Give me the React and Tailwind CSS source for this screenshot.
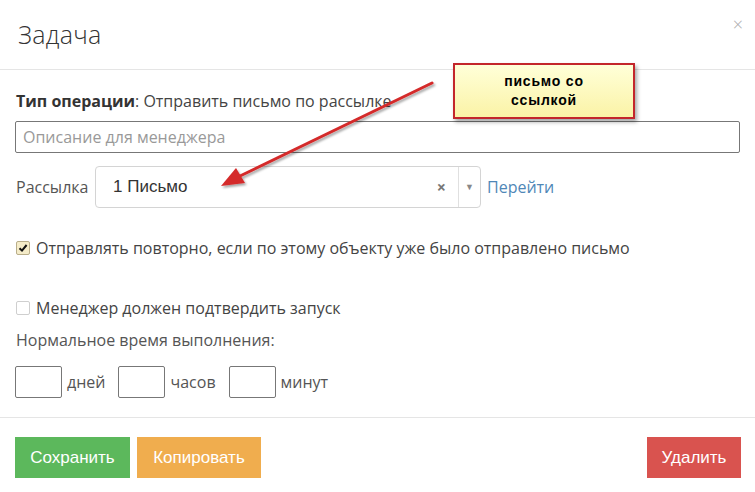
import React from "react";

const Checkbox = ({ checked }) => (
  <span
    className={`flex h-[14px] w-[14px] shrink-0 items-center justify-center rounded-[2px] border ${
      checked ? "border-[#b9ae8a] bg-[#f5ecc9]" : "border-[#cfcfcf] bg-white"
    }`}
  >
    {checked && (
      <svg width="10" height="10" viewBox="0 0 10 10">
        <path d="M1.5 5.2 L4 7.6 L8.6 2" fill="none" stroke="#111" strokeWidth="2" />
      </svg>
    )}
  </span>
);

const SmallInput = ({ label }) => (
  <div className="flex items-center gap-[5px]">
    <div className="h-[32px] w-[47px] rounded-[2px] border border-[#777]" />
    <span className="text-[16px] text-[#555]">{label}</span>
  </div>
);

export default function App() {
  return (
    <div
      className="relative h-[492px] w-[755px] overflow-hidden bg-white text-[#333]"
      style={{ fontFamily: "'Open Sans', 'Liberation Sans', sans-serif" }}
    >
      {/* header */}
      <div className="flex h-[70px] items-center justify-between border-b border-[#e5e5e5] pl-[18px] pr-[12px]">
        <h2 className="text-[25px] font-light tracking-[0.3px] text-[#333]">Задача</h2>
        <span className="-mt-[20px] text-[18px] font-light text-[#aaa]">×</span>
      </div>

      {/* body */}
      <div className="flex flex-col px-[15px] pt-[20px] text-[16px] leading-[22px]">
        <div className="pl-[1px] text-[#444]">
          <span className="font-bold text-[#333]">Тип операции</span>: Отправить письмо по рассылке
        </div>
        <div className="mt-[9px] flex h-[32px] items-center rounded-[2px] border border-[#777] px-[7px] text-[#999]">
          Описание для менеджера
        </div>

        <div className="mt-[13px] flex items-center">
          <span className="w-[80px] pl-[1px] text-[#555]">Рассылка</span>
          <div className="flex h-[42px] w-[386px] items-center rounded-[4px] border border-[#d4d4d4]">
            <span
              className="flex-1 pl-[17px] text-[17px] text-[#333]"
              style={{ fontFamily: "'Liberation Sans', Arial, sans-serif" }}
            >
              1 Письмо
            </span>
            <span className="pr-[12px] text-[16px] font-bold text-[#777]">×</span>
            <div className="flex h-full w-[22px] items-center justify-center border-l border-[#e0e0e0] text-[9px] text-[#888]">
              ▼
            </div>
          </div>
          <span className="ml-[6px] text-[#4f87b7]">Перейти</span>
        </div>

        <label className="mt-[29px] flex items-center gap-[6px] pl-[1px] text-[#444]">
          <Checkbox checked />
          Отправлять повторно, если по этому объекту уже было отправлено письмо
        </label>

        <label className="mt-[38px] flex items-center gap-[6px] pl-[1px] text-[#444]">
          <Checkbox />
          Менеджер должен подтвердить запуск
        </label>

        <div className="mt-[10px] pl-[1px] text-[#555]">Нормальное время выполнения:</div>

        <div className="mt-[15px] flex items-center gap-[13px]">
          <SmallInput label="дней" />
          <SmallInput label="часов" />
          <SmallInput label="минут" />
        </div>
      </div>

      {/* footer */}
      <div
        className="mt-[19px] flex items-center justify-between border-t border-[#e5e5e5] px-[15px] pt-[19px] text-[17px] text-white"
        style={{ fontFamily: "'Liberation Sans Narrow', 'Liberation Sans', sans-serif" }}
      >
        <div className="flex gap-[7px]">
          <button className="h-[41px] w-[115px] bg-[#5cb85c]">Сохранить</button>
          <button className="h-[41px] w-[124px] bg-[#f0ad4e]">Копировать</button>
        </div>
        <button className="mr-[-1px] h-[41px] w-[94px] bg-[#d9534f]">Удалить</button>
      </div>

      {/* annotation callout */}
      <div
        className="absolute left-[453px] top-[63px] flex h-[56px] w-[182px] items-center justify-center border-2 border-[#c3262b] bg-gradient-to-b from-[#ffffd8] to-[#fbf3a6] text-center text-[14px] font-bold leading-[19px] tracking-[0.8px] text-black shadow-[2px_3px_4px_rgba(0,0,0,0.35)]"
        style={{ fontFamily: "'Liberation Sans', Arial, sans-serif" }}
      >
        письмо со
        <br />
        ссылкой
      </div>

      {/* annotation arrow */}
      <svg className="pointer-events-none absolute left-0 top-0" width="755" height="492">
        <defs>
          <filter id="sh" x="-10%" y="-10%" width="130%" height="130%">
            <feDropShadow dx="1.5" dy="2" stdDeviation="1.2" floodColor="#000" floodOpacity="0.35" />
          </filter>
        </defs>
        <g filter="url(#sh)">
          <line x1="432" y1="83" x2="240" y2="176" stroke="#d42a2a" strokeWidth="3" strokeLinecap="round" />
          <path d="M221 186 L236 168 L245 183 Z" fill="#d42a2a" />
        </g>
      </svg>
    </div>
  );
}
